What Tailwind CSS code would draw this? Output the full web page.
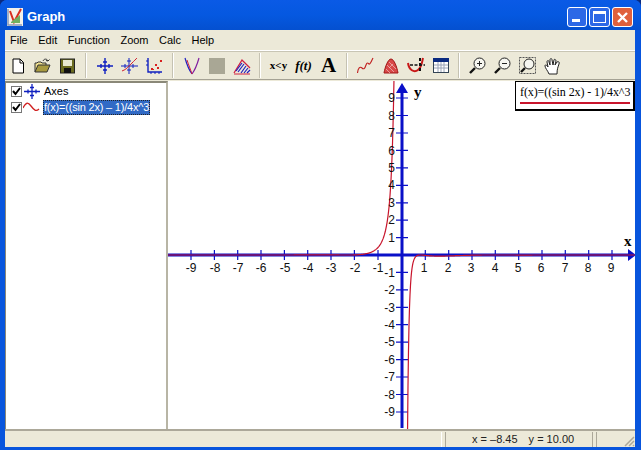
<!DOCTYPE html>
<html lang="en">

<head>
    <meta charset="UTF-8">
    <title>Graph</title>
    <script src="https://cdn.jsdelivr.net/npm/@tailwindcss/browser@4"></script>
</head>

<body class="bg-[#0a2a80] overflow-hidden">

    <div class="w-[641px] h-[450px] flex flex-col rounded-t-[7px] overflow-hidden bg-[#0855dd] font-['Liberation_Sans',sans-serif] text-[11px] text-black">

        <!-- title bar -->
        <div class="h-[30px] shrink-0 flex items-center pt-[4px] pl-[7px] pr-[8px] bg-gradient-to-b from-[#0a5ae6] via-[#0558e0] to-[#0450d0]">
            <svg width="16" height="18" viewBox="0 0 16 18">
                <rect x="0" y="0" width="16" height="18" fill="#f4f2ea" />
                <path d="M1 1V17H15" fill="none" stroke="#8a9ab8" stroke-width="1.5" />
                <path d="M3 3L7 14L14 1" fill="none" stroke="#d83020" stroke-width="2" />
                <path d="M4 14L13 7V15H4Z" fill="#70b060" />
            </svg>
            <span class="ml-[4px] text-white font-bold text-[13px]">Graph</span>
            <div class="ml-auto flex gap-[2px]">
                <div class="w-[20px] h-[20px] rounded-[3px] border border-white bg-[#2d68e6] flex items-end pl-[4px] pb-[4px]">
                    <div class="w-[8px] h-[3px] bg-white"></div>
                </div>
                <div class="w-[21px] h-[20px] rounded-[3px] border border-white bg-[#2d68e6] flex items-center justify-center">
                    <div class="w-[13px] h-[12px] border border-white border-t-[3px]"></div>
                </div>
                <div class="w-[21px] h-[20px] rounded-[3px] border border-white bg-[#e0603c] flex items-center justify-center">
                    <svg width="13" height="13" viewBox="0 0 13 13"><path d="M2 2L11 11M11 2L2 11" stroke="#fff" stroke-width="2.4" /></svg>
                </div>
            </div>
        </div>

        <div class="flex-1 min-h-0 flex flex-col ml-[5px] mr-[6px] mb-[3px] bg-[#ece9d8]">

            <!-- menu -->
            <div class="h-[21px] shrink-0 flex items-center pl-[5px] gap-[10.5px] border-b border-[#fff]">
                <span>File</span><span>Edit</span><span>Function</span><span>Zoom</span><span>Calc</span><span>Help</span>
            </div>

            <!-- toolbar -->
            <div class="h-[29px] shrink-0 flex items-center border-t border-[#c8c5b4] border-b border-b-[#a5a294]">
                <div class="w-[25px] flex justify-center">
                    <svg width="14" height="16" viewBox="0 0 14 16"><path d="M2 1H9L12.5 4.5V15H2Z" fill="#fff" stroke="#000" /><path d="M9 1V5H12.5" fill="none" stroke="#000" /></svg>
                </div>
                <div class="w-[25px] flex justify-center">
                    <svg width="17" height="16" viewBox="0 0 17 16"><path d="M1 14V5H3L4 4H7L8 5H12V7" fill="#f0e090" stroke="#333" /><path d="M1 14L4 7H16L13 14Z" fill="#a89a40" stroke="#333" /><path d="M9 3C10 0.500 13 0.500 14 3M14 3L15.500 1.500M14 3L12 2.500" fill="none" stroke="#333" /></svg>
                </div>
                <div class="w-[25px] flex justify-center">
                    <svg width="15" height="16" viewBox="0 0 15 16"><rect x="0.500" y="1" width="14" height="14" fill="#6b6b20" stroke="#222" /><rect x="3" y="2" width="9" height="6" fill="#e8e8d0" /><rect x="4" y="10" width="7" height="5" fill="#111" /></svg>
                </div>
                <div class="w-[12px] flex justify-center"><div class="w-[2px] h-[25px] bg-[#c5c2b2] border-r border-white"></div></div>

                <div class="w-[25px] flex justify-center">
                    <svg width="16" height="16" viewBox="0 0 16 16"><path d="M0 8H16M8 0V16M4 6V10M12 6V10M6 4H10M6 12H10" stroke="#1020c0" stroke-width="1.400" fill="none" /></svg>
                </div>
                <div class="w-[25px] flex justify-center">
                    <svg width="17" height="17" viewBox="0 0 17 17"><path d="M0 9H17M8 1V17M4 7V11M12 7V11M6 4H10M6 13H10" stroke="#1020c0" fill="none" /><path d="M1 14C5 13 9 8 11 6S15 2 16 1" stroke="#d02030" fill="none" /></svg>
                </div>
                <div class="w-[25px] flex justify-center">
                    <svg width="17" height="17" viewBox="0 0 17 17"><path d="M2 1V15H16" stroke="#1020c0" stroke-width="1.400" fill="none" /><path d="M0 4H2M0 8H2M5 15V17M9 15V17M13 15V17" stroke="#1020c0" /><path d="M5 11h2v2h-2zM9 7h2v2h-2zM11 10h2v2h-2zM14 3h2v2h-2zM7 12h1v1h-1z" fill="#d82020" /></svg>
                </div>
                <div class="w-[12px] flex justify-center"><div class="w-[2px] h-[25px] bg-[#c5c2b2] border-r border-white"></div></div>

                <div class="w-[25px] flex justify-center">
                    <svg width="16" height="18" viewBox="0 0 16 18"><path d="M1 1C3 8 5 13 8 17" fill="none" stroke="#2020c0" stroke-width="1.200" /><path d="M15 1C13 8 11 13 8 17" fill="none" stroke="#8020a0" stroke-width="1.200" /><path d="M3 3C5 9 6 11 8 17" fill="none" stroke="#d02040" /></svg>
                </div>
                <div class="w-[25px] flex justify-center">
                    <div class="w-[16px] h-[16px] bg-[#a9a795]"></div>
                </div>
                <div class="w-[25px] flex justify-center">
                    <svg width="18" height="18" viewBox="0 0 18 18"><path d="M1 16L9 3L17 11" fill="none" stroke="#d02040" stroke-width="1.300" /><path d="M5 15L11 7M8 16L13 9M11 16L15 11M14 16L17 13M3 14L9 6" stroke="#2020c0" stroke-width="1.200" /><path d="M1 17H17" stroke="#d02040" /></svg>
                </div>
                <div class="w-[12px] flex justify-center"><div class="w-[2px] h-[25px] bg-[#c5c2b2] border-r border-white"></div></div>

                <div class="w-[25px] flex justify-center font-['Liberation_Serif',serif] font-bold text-[11px] leading-none">x&lt;y</div>
                <div class="w-[25px] flex justify-center font-['Liberation_Serif',serif] font-bold italic text-[13px] leading-none">f(t)</div>
                <div class="w-[25px] flex justify-center font-['Liberation_Serif',serif] font-bold text-[21px] leading-none">A</div>
                <div class="w-[12px] flex justify-center"><div class="w-[2px] h-[25px] bg-[#c5c2b2] border-r border-white"></div></div>

                <div class="w-[25px] flex justify-center">
                    <svg width="17" height="17" viewBox="0 0 17 17"><path d="M0.500 16C1 11 3 9 5 11S8 11 9 8S11 6 12 7S15 3 16 1" fill="none" stroke="#c02020" stroke-width="1.100" /></svg>
                </div>
                <div class="w-[25px] flex justify-center">
                    <svg width="16" height="16" viewBox="0 0 16 16"><path d="M1 15C2 9 5 1 8 1S14 9 15 15Z" fill="#d84848" stroke="#a01818" /><path d="M4 7L11 14M6 4L13 11M3 11L7 15M10 6L6 10" stroke="#f0c0c0" stroke-width="0.700" /></svg>
                </div>
                <div class="w-[25px] flex justify-center">
                    <svg width="18" height="17" viewBox="0 0 18 17"><path d="M1 6C2 13 7 16 11 13S15 5 16 1" fill="none" stroke="#c81818" stroke-width="2" /><path d="M3 8H18" stroke="#111" stroke-width="1.500" stroke-dasharray="3 1.500" /><path d="M13 1V15" stroke="#111" stroke-width="2" stroke-dasharray="3 2" /></svg>
                </div>
                <div class="w-[25px] flex justify-center">
                    <svg width="16" height="15" viewBox="0 0 16 15"><rect x="0.500" y="0.500" width="15" height="14" fill="#fff" stroke="#345" /><rect x="0" y="0" width="16" height="4" fill="#0a2a80" /><path d="M1 7H15M1 10H15M5 4V14M8 4V14M11 4V14" stroke="#9aa4b8" /></svg>
                </div>
                <div class="w-[12px] flex justify-center"><div class="w-[2px] h-[25px] bg-[#c5c2b2] border-r border-white"></div></div>

                <div class="w-[25px] flex justify-center">
                    <svg width="17" height="17" viewBox="0 0 17 17"><circle cx="10.500" cy="6.500" r="5.500" fill="#f6f6f0" stroke="#222" /><path d="M6 11L1 16" stroke="#111" stroke-width="2.400" /><path d="M8 6.500H13M10.500 4V9" stroke="#222" /></svg>
                </div>
                <div class="w-[25px] flex justify-center">
                    <svg width="17" height="17" viewBox="0 0 17 17"><circle cx="10.500" cy="6.500" r="5.500" fill="#f6f6f0" stroke="#222" /><path d="M6 11L1 16" stroke="#111" stroke-width="2.400" /><path d="M8 6.500H13" stroke="#222" /></svg>
                </div>
                <div class="w-[25px] flex justify-center">
                    <svg width="17" height="17" viewBox="0 0 17 17"><rect x="0.500" y="0.500" width="16" height="16" fill="none" stroke="#555" stroke-dasharray="2 1" /><circle cx="10" cy="7" r="5" fill="#f6f6f0" stroke="#222" /><path d="M6 11L2 15" stroke="#111" stroke-width="2.400" /></svg>
                </div>
                <div class="w-[25px] flex justify-center">
                    <svg width="18" height="18" viewBox="0 0 18 18"><path d="M5 17C4 14 1 11 1 9S3 8 4 10L3 5C3 3 5 3 5 5L6 8L6 3C6 1 8 1 8 3L9 8L10 3C10 2 12 2 12 4L11 8L13 5C14 4 16 5 15 7C14 10 13 12 13 17Z" fill="#fff" stroke="#222" /></svg>
                </div>
            </div>

            <!-- main -->
            <div class="flex-1 min-h-0 flex mt-[1px]">
                <div class="w-[163px] shrink-0 bg-white border-t-2 border-t-[#8a8878] border-l border-l-[#8a8878] border-r-2 border-r-[#b8b5a5] pl-[5px]">
                    <div class="flex items-center h-[16px]">
                        <div class="w-[11px] h-[11px] border border-[#777] flex items-center justify-center">
                            <svg width="9" height="9" viewBox="0 0 9 9"><path d="M1 4L3.500 7L8 1" fill="none" stroke="#000" stroke-width="2" /></svg>
                        </div>
                        <svg class="ml-[2px]" width="16" height="15" viewBox="0 0 16 15"><path d="M0 7.500H16M8 0V15M4 5.500V9.500M12 5.500V9.500M6 3.500H10M6 11.500H10" stroke="#1020c0" stroke-width="1.300" fill="none" /></svg>
                        <span class="ml-[4px]">Axes</span>
                    </div>
                    <div class="flex items-center h-[16px]">
                        <div class="w-[11px] h-[11px] border border-[#777] flex items-center justify-center">
                            <svg width="9" height="9" viewBox="0 0 9 9"><path d="M1 4L3.500 7L8 1" fill="none" stroke="#000" stroke-width="2" /></svg>
                        </div>
                        <svg class="ml-[1px]" width="17" height="12" viewBox="0 0 17 12"><path d="M0 7C3 1 5 1 8 5S13 11 16 8" fill="none" stroke="#d02020" stroke-width="1.300" /></svg>
                        <span class="ml-[3px] px-[1px] bg-[#316ac5] text-white tracking-[-0.2px] outline-1 outline-dotted outline-[#222] -outline-offset-1 leading-[15px]">f(x)=((sin 2x) – 1)/4x^3</span>
                    </div>
                </div>

                <!-- graph area -->
                <div class="relative flex-1 bg-white overflow-hidden">
                    <svg width="467" height="348" viewBox="168 81 467 348" class="block">
                        <g stroke="#0a10c8" stroke-width="1.200" fill="none">
                            <path d="M191 250V260M214.400 250V260M237.700 250V260M261 250V260M284.400 250V260M307.700 250V260M331 250V260M354.400 250V260M378 250V260M425.300 250V260M448.700 250V260M472 250V260M495.300 250V260M518.700 250V260M542 250V260M565.300 250V260M588.700 250V260M612 250V260" />
                            <path d="M396 98H408M396 115.500H408M396 133H408M396 150.400H408M396 167.800H408M396 185.300H408M396 202.800H408M396 220.200H408M396 237.600H408M396 272.400H408M396 289.800H408M396 307.300H408M396 324.700H408M396 342.200H408M396 359.700H408M396 377H408M396 394.500H408M396 412H408" />
                        </g>
                        <path d="M168 255H628" stroke="#0a10c8" stroke-width="3" />
                        <path d="M402 428V92" stroke="#0a10c8" stroke-width="3" />
                        <path d="M628 249L636 255L628 261Z" fill="#0a10c8" />
                        <path d="M396 93L402 83L408 93Z" fill="#0a10c8" />
                        <path id="curve" fill="none" stroke="#c8142c" stroke-width="1.200" />

                        <g font-family="Liberation Sans" font-size="12" fill="#111" text-anchor="middle">
                            <text x="191" y="272">-9</text><text x="215" y="272">-8</text><text x="238" y="272">-7</text><text x="261" y="272">-6</text><text x="285" y="272">-5</text><text x="308" y="272">-4</text><text x="331" y="272">-3</text><text x="355" y="272">-2</text><text x="378" y="272">-1</text>
                            <text x="424" y="272">1</text><text x="448" y="272">2</text><text x="471" y="272">3</text><text x="495" y="272">4</text><text x="518" y="272">5</text><text x="541" y="272">6</text><text x="565" y="272">7</text><text x="588" y="272">8</text><text x="611" y="272">9</text>
                        </g>
                        <g font-family="Liberation Sans" font-size="12" fill="#111" text-anchor="end">
                            <text x="395" y="102">9</text><text x="395" y="120">8</text><text x="395" y="137">7</text><text x="395" y="155">6</text><text x="395" y="172">5</text><text x="395" y="189">4</text><text x="395" y="207">3</text><text x="395" y="224">2</text><text x="395" y="242">1</text>
                            <text x="395" y="277">-1</text><text x="395" y="294">-2</text><text x="395" y="312">-3</text><text x="395" y="329">-4</text><text x="395" y="346">-5</text><text x="395" y="364">-6</text><text x="395" y="381">-7</text><text x="395" y="399">-8</text><text x="395" y="416">-9</text>
                        </g>
                        <text x="414" y="97" font-family="Liberation Serif" font-weight="bold" font-size="15">y</text>
                        <text x="624" y="246" font-family="Liberation Serif" font-weight="bold" font-size="15">x</text>
                    </svg>

                    <!-- legend -->
                    <div class="absolute right-0 top-0 w-[120px] h-[30px] bg-white border border-black border-b-2 border-r-2 pl-[4px] pt-[2px] font-['Liberation_Serif',serif] text-[12px] tracking-[-0.1px] leading-[16px] whitespace-nowrap">
                        f(x)=((sin 2x) - 1)/4x^3
                        <div class="w-[110px] h-[2px] bg-[#c8142c] mt-[2px]"></div>
                    </div>
                </div>
            </div>

            <!-- status bar -->
            <div class="h-[18px] shrink-0 flex gap-[3px] border-t-2 border-t-[#aca899] pt-[1px]">
                <div class="w-[437px] border-r border-r-white"></div>
                <div class="w-[148px] border-l border-r border-l-[#aca899] border-r-[#aca899] flex items-center pl-[26px] gap-[11px] text-[11px] text-[#222]">
                    <span>x = –8.45</span><span>y = 10.00</span>
                </div>
                <div class="relative flex-1 border-l border-l-[#aca899]">
                    <svg class="absolute right-0 bottom-0" width="12" height="12" viewBox="0 0 12 12"><path d="M11 2L2 11M11 6L6 11M11 10L10 11" stroke="#aca899" stroke-width="1.500" /></svg>
                </div>
            </div>
        </div>
    </div>

    <script>
        // plot y = (sin 2x - 1) / (4x^3) in screen coordinates
        const originX = 402, originY = 255, unitX = 23.33, unitY = 17.44;
        function branch(from, to) {
            let d = "";
            for (let px = from; px <= to; px += 0.5) {
                const x = (px - originX) / unitX;
                const y = (Math.sin(2 * x) - 1) / (4 * x * x * x);
                const py = Math.min(Math.max(originY - y * unitY, 60), 450);
                d += (d ? "L" : "M") + px + " " + py.toFixed(1);
            }
            return d;
        }
        document.getElementById("curve").setAttribute("d", branch(168, 397) + branch(406, 635));
    </script>

</body>

</html>
